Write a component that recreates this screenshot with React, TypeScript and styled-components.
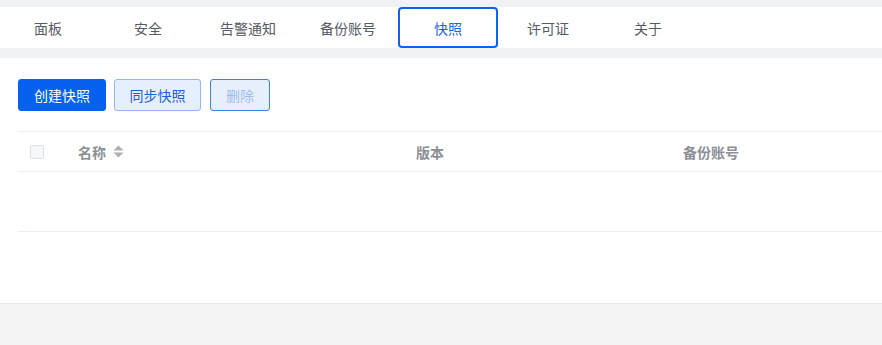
import React from "react";
import styled, { createGlobalStyle } from "styled-components";

const Global = createGlobalStyle`
  html, body { margin: 0; padding: 0; background: #f3f3f3; }
  body { font-family: "Noto Sans CJK SC", "Noto Sans", sans-serif; }
  * { box-sizing: border-box; }
`;

const Page = styled.div`
  width: 882px;
  height: 345px;
  background: #f3f3f3;
  overflow: hidden;
`;

const TopGap = styled.div`
  height: 7px;
  background: #f1f2f4;
`;

const TabBar = styled.div`
  height: 41px;
  background: #ffffff;
  display: flex;
`;

const TabList = styled.div`
  display: flex;
  margin-left: -2px;
`;

const Tab = styled.div<{ $active?: boolean }>`
  width: 100px;
  height: 41px;
  display: flex;
  align-items: center;
  justify-content: center;
  font-size: 14px;
  color: ${(p) => (p.$active ? "#1463f0" : "#555a63")};
  border: 2px solid ${(p) => (p.$active ? "#0b63f3" : "transparent")};
  border-radius: 4px;
  cursor: pointer;
`;

const Divider = styled.div`
  height: 10px;
  background: #f1f2f4;
`;

const Panel = styled.div`
  height: 246px;
  background: #ffffff;
  padding: 21px 0 0 18px;
  border-bottom: 1px solid #e6e9ef;
`;

const Toolbar = styled.div`
  display: flex;
  gap: 8px;
`;

const Button = styled.button<{ $variant: "primary" | "plain" | "disabled"; $w: number }>`
  width: ${(p) => p.$w}px;
  height: 32px;
  border-radius: 3px;
  font-family: inherit;
  font-size: 14px;
  padding: 0;
  cursor: pointer;
  ${(p) =>
    p.$variant === "primary"
      ? `background:#0661f0;border:1px solid #0661f0;color:#ffffff;`
      : p.$variant === "plain"
      ? `background:#e6effd;border:1px solid #92b6f3;color:#1b5fd8;`
      : `background:#e8effc;border:1px solid #3a80ee;color:#9fbcef;margin-left:1px;`}
`;

const Table = styled.div`
  margin-top: 20px;
  border-top: 1px solid #ebeef3;
`;

const HeaderRow = styled.div`
  display: grid;
  grid-template-columns: 60px 338px 267px 1fr;
  height: 40px;
  align-items: center;
  border-bottom: 1px solid #ebeef3;
`;

const HeadCell = styled.div`
  display: flex;
  align-items: center;
  gap: 7px;
  font-size: 14px;
  font-weight: 700;
  color: #8c8f96;
`;

const CheckCell = styled.div`
  padding-left: 12px;
  display: flex;
  align-items: center;
`;

const Checkbox = styled.span`
  width: 14px;
  height: 14px;
  border: 1px solid #dcdfe6;
  background: #f5f7fa;
  border-radius: 2px;
  display: inline-block;
`;

const EmptyRow = styled.div`
  height: 60px;
  border-bottom: 1px solid #ebeef3;
`;

const SortIcon = () => (
  <svg width="11" height="13" viewBox="0 0 11 13">
    <path d="M5.5 0.5 L10.5 5.5 L0.5 5.5 Z" fill="#acafb5" />
    <path d="M5.5 12.5 L10.5 7.5 L0.5 7.5 Z" fill="#acafb5" />
  </svg>
);

export default function App() {
  const tabs = ["面板", "安全", "告警通知", "备份账号", "快照", "许可证", "关于"];
  return (
    <Page>
      <Global />
      <TopGap />
      <TabBar>
        <TabList>
          {tabs.map((t) => (
            <Tab key={t} $active={t === "快照"}>
              {t}
            </Tab>
          ))}
        </TabList>
      </TabBar>
      <Divider />
      <Panel>
        <Toolbar>
          <Button $variant="primary" $w={88}>创建快照</Button>
          <Button $variant="plain" $w={87}>同步快照</Button>
          <Button $variant="disabled" $w={60}>删除</Button>
        </Toolbar>
        <Table>
          <HeaderRow>
            <CheckCell>
              <Checkbox />
            </CheckCell>
            <HeadCell>
              名称 <SortIcon />
            </HeadCell>
            <HeadCell>版本</HeadCell>
            <HeadCell>备份账号</HeadCell>
          </HeaderRow>
          <EmptyRow />
        </Table>
      </Panel>
    </Page>
  );
}
